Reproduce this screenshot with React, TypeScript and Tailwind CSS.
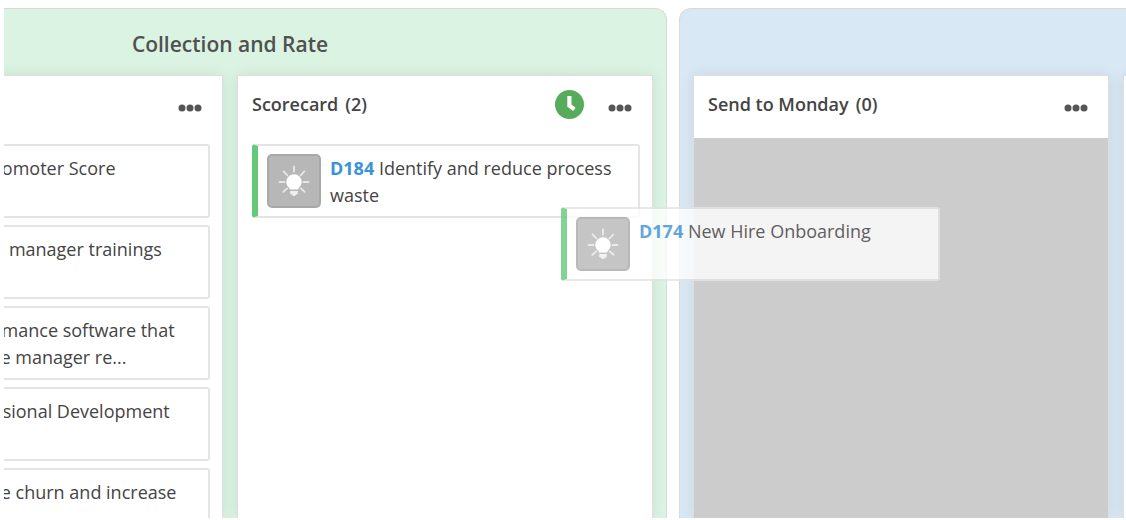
import clsx from 'clsx';
import type { ReactNode } from 'react';

const collectionTasks = [
  { id: 'D171', title: 'Net Promoter Score' },
  { id: 'D172', title: 'Create manager trainings' },
  { id: 'D175', title: 'performance software that will complete manager re...' },
  { id: 'D178', title: 'Professional Development' },
  { id: 'D180', title: 'Reduce churn and increase' },
];

const BulbIcon = () => (
  <div className="flex h-[54px] w-[54px] shrink-0 items-center justify-center rounded-[5px] border-2 border-[#a8a8a8] bg-[#b7b7b7]">
    <svg width="32" height="32" viewBox="0 0 32 32" fill="none" aria-hidden="true">
      <path
        d="M16 1.5v5M1.5 17h5M25.5 17h5M5.6 6.4l3.8 4M26.4 6.4l-3.8 4M5.4 26.8l3.8-3.4M26.6 26.8l-3.8-3.4"
        stroke="#e6e6e6"
        strokeWidth="1.9"
        strokeLinecap="round"
      />
      <path
        d="M16 9.2a7.7 7.7 0 0 0-7.7 7.7c0 2.6 1.4 4.1 2.6 5.5.7.8 1 1.5 1.1 2.2h8c.1-.7.4-1.4 1.1-2.2 1.2-1.4 2.6-2.9 2.6-5.5A7.7 7.7 0 0 0 16 9.2z"
        fill="#fff"
      />
      <path d="M12.2 26h7.6v2.2c0 .8-.6 1.3-1.4 1.3h-.4c-.2.9-1 1.5-2 1.5s-1.8-.6-2-1.5h-.4c-.8 0-1.4-.5-1.4-1.3z" fill="#f0f0f0" />
    </svg>
  </div>
);

const ClockIcon = () => (
  <svg width="29" height="29" viewBox="0 0 29 29" role="img" aria-label="Scheduled">
    <circle cx="14.5" cy="14.5" r="14.5" fill="#57ac5b" />
    <path d="M14.4 6v9.6l5 3.8" fill="none" stroke="#fff" strokeWidth="4.2" />
  </svg>
);

const MenuButton = ({ label }: { label: string }) => (
  <button type="button" aria-label={label} className="flex h-6 w-6 items-center justify-center">
    <svg width="24" height="8" viewBox="0 0 24 8" fill="#555">
      <circle cx="4" cy="4" r="3.5" />
      <circle cx="12" cy="4" r="3.5" />
      <circle cx="20" cy="4" r="3.5" />
    </svg>
  </button>
);

type ColumnProps = {
  title?: string;
  count?: number;
  scheduled?: boolean;
  dropTarget?: boolean;
  children?: ReactNode;
};

const Column = ({ title, count, scheduled, dropTarget, children }: ColumnProps) => (
  <section className="flex w-[416px] shrink-0 flex-col overflow-hidden border border-b-0 border-[#dedede] bg-white shadow-[0_0_14px_rgba(0,0,0,0.08)]">
    <header className="flex h-[62px] shrink-0 items-center pt-[2px] pr-5 pl-[14px]">
      {title && (
        <h3 className="flex grow gap-[7px] pb-2 text-lg font-semibold">
          <span>{title}</span>
          <span>({count})</span>
        </h3>
      )}
      <div className="ml-auto flex items-center gap-6">
        {scheduled && (
          <div className="pb-2">
            <ClockIcon />
          </div>
        )}
        <MenuButton label={title ? `${title} options` : 'Column options'} />
      </div>
    </header>
    <div className={clsx('flex min-h-0 grow flex-col gap-[7px] pt-[6px] pr-3 pl-[14px]', dropTarget && 'bg-[#ccc]')}>
      {children}
    </div>
  </section>
);

const TaskCard = ({ id, title }: { id: string; title: string }) => (
  <article className="flex h-[74px] shrink-0 gap-[9px] rounded-[3px] border-2 border-l-[6px] border-[#e4e4e4] border-l-[#65c97a] bg-white pt-2 pr-3 pl-[9px]">
    <BulbIcon />
    <p className="pt-px text-lg leading-[27px]">
      <a href="#" className="font-bold text-[#3c92d8]">{id}</a> {title}
    </p>
  </article>
);

const Group = ({ title, tone, children }: { title?: string; tone: 'green' | 'blue'; children: ReactNode }) => (
  <section
    className={clsx(
      'flex min-h-0 shrink-0 flex-col rounded-t-xl border border-b-0 border-[#d9d9d9] px-[13px]',
      tone === 'green' ? 'bg-[#daf3e2]' : 'bg-[#d9e8f5]'
    )}
  >
    <h2 className="flex h-[66px] shrink-0 items-center justify-center pt-[6px] text-[21px] font-semibold text-[#505050]">{title}</h2>
    <div className="flex min-h-0 grow gap-[14px]">{children}</div>
  </section>
);

export default function App() {
  return (
    <main className="relative h-screen overflow-hidden bg-white pt-2 pb-[2px] pl-1 font-['Open_Sans',sans-serif] text-[#444]">
      <div className="h-full overflow-hidden">
        {/* Board is scrolled part of the way through the first column */}
        <div className="-ml-[211px] flex h-full gap-3">
          <Group title="Collection and Rate" tone="green">
            <Column>
              {collectionTasks.map((task) => (
                <TaskCard key={task.id} {...task} />
              ))}
            </Column>
            <Column title="Scorecard" count={2} scheduled>
              <TaskCard id="D184" title="Identify and reduce process waste" />
            </Column>
          </Group>
          <Group tone="blue">
            <Column title="Send to Monday" count={0} dropTarget />
            <Column />
          </Group>
        </div>
      </div>

      {/* Card being dragged between columns */}
      <div className="absolute top-[207px] left-[561px] w-[379px] opacity-80">
        <TaskCard id="D174" title="New Hire Onboarding" />
      </div>
    </main>
  );
}
